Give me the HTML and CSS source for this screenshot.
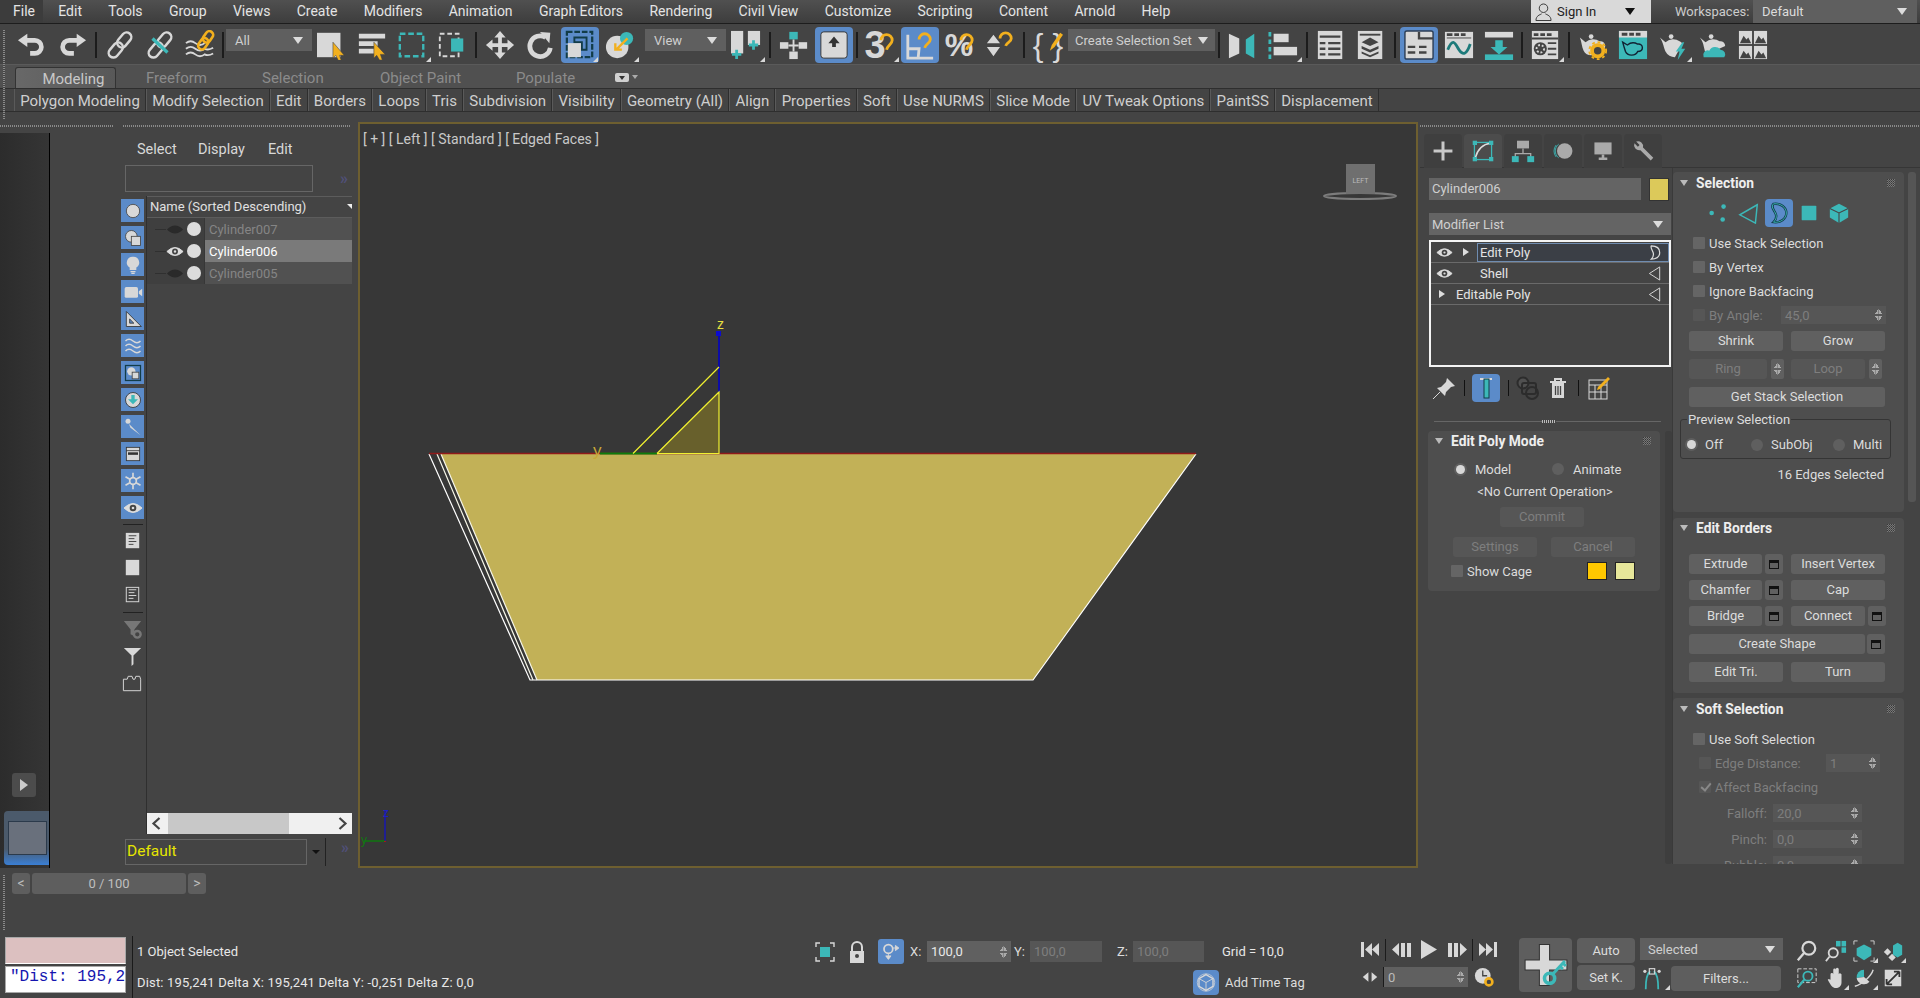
FILE: index.html
```html
<!DOCTYPE html>
<html lang="en">
<head>
  <meta charset="UTF-8">
  <title>3ds Max</title>
  <link rel="stylesheet" href="styles.css">
</head>
<body>

<!-- icon set -->
<svg class="defs" width="0" height="0">
  <symbol id="i-undo" viewBox="0 0 32 32"><path d="M9 11h10a6.500 6.500 0 0 1 0 14h-5" fill="none" stroke="#d8d8d8" stroke-width="5"/><path d="M1 11l10-7v14z" fill="#d8d8d8"/></symbol>
  <symbol id="i-redo" viewBox="0 0 32 32"><path d="M23 11h-10a6.500 6.500 0 0 0 0 14h5" fill="none" stroke="#d8d8d8" stroke-width="5"/><path d="M31 11l-10-7v14z" fill="#d8d8d8"/></symbol>
  <symbol id="i-link" viewBox="0 0 32 32"><g transform="rotate(-50 16 16)" fill="none" stroke="#d8d8d8" stroke-width="2.600"><rect x="0" y="11" width="18" height="10" rx="5"/><rect x="14" y="11" width="18" height="10" rx="5"/></g></symbol>
  <symbol id="i-unlink" viewBox="0 0 32 32"><g transform="rotate(-50 16 16)" fill="none" stroke="#d8d8d8" stroke-width="2.600"><rect x="0" y="11" width="18" height="10" rx="5"/><rect x="14" y="11" width="18" height="10" rx="5"/></g><path d="M8 9l16 15" stroke="#3cb8b8" stroke-width="3.500"/></symbol>
  <symbol id="i-bind" viewBox="0 0 32 32"><path d="M1 14q5-4 10 0t10 0M1 20q5-4 10 0t10 0q4 2 9-1M1 26q5-4 10 0t10 0q4 2 9-1" fill="none" stroke="#d8d8d8" stroke-width="2"/><g transform="rotate(-55 22 11)" fill="none" stroke="#f2b01e" stroke-width="2.800"><rect x="11" y="7" width="13" height="8" rx="4"/><rect x="20" y="7" width="13" height="8" rx="4"/></g></symbol>
  <symbol id="i-sel" viewBox="0 0 32 32"><rect x="0" y="3" width="25" height="26" fill="#d8d8d8"/><path d="M17 13l12 14-5 0 2 6-3 0-3-6-3 3z" fill="#f2b01e" stroke="#444" stroke-width=".6"/></symbol>
  <symbol id="i-name" viewBox="0 0 32 32"><path d="M2 4h28v5H2zM2 12h20v5H2zM2 20h18v5H2z" fill="#d8d8d8"/><path d="M18 13l12 13-5 0 2 6-3 0-3-5-3 3z" fill="#f2b01e" stroke="#444" stroke-width=".6"/></symbol>
  <symbol id="i-rect" viewBox="0 0 32 32"><rect x="3" y="4" width="25" height="24" fill="none" stroke="#3cb8b8" stroke-width="2.500" stroke-dasharray="6 3"/></symbol>
  <symbol id="i-window" viewBox="0 0 32 32"><rect x="3" y="4" width="20" height="24" fill="none" stroke="#d8d8d8" stroke-width="2" stroke-dasharray="5 3"/><rect x="15" y="9" width="13" height="14" fill="#3cb8b8"/></symbol>
  <symbol id="i-move" viewBox="0 0 32 32"><path d="M16 1l6 7h-4v6h6v-4l7 6-7 6v-4h-6v6h4l-6 7-6-7h4v-6H8v4l-7-6 7-6v4h6V8h-4z" fill="#d8d8d8"/></symbol>
  <symbol id="i-rotate" viewBox="0 0 32 32"><path d="M22 8a11 11 0 1 0 5 11" fill="none" stroke="#d8d8d8" stroke-width="5"/><path d="M16 2l11 1-1 11z" fill="#d8d8d8"/></symbol>
  <symbol id="i-scale" viewBox="0 0 32 32"><rect x="2" y="2" width="27" height="27" fill="none" stroke="#123c48" stroke-width="2.400" stroke-dasharray="6 2"/><path d="M10 8h13v13h-5v-8h-8z" fill="none" stroke="#123c48" stroke-width="2"/><rect x="3" y="14" width="14" height="15" fill="#d8d8d8"/></symbol>
  <symbol id="i-pivot" viewBox="0 0 32 32"><circle cx="13" cy="18" r="12" fill="#d8d8d8"/><circle cx="23" cy="9" r="7" fill="#3cb8b8"/><path d="M24 9L12 21M11 14v7h7" fill="none" stroke="#f2b01e" stroke-width="2.500"/></symbol>
  <symbol id="i-snapbars" viewBox="0 0 32 32"><rect x="0" y="1" width="13" height="24" fill="#d8d8d8"/><rect x="18" y="1" width="13" height="15" fill="#d8d8d8"/><path d="M6 21v10M1 26h10M24 11v10M19 16h10" stroke="#3cb8b8" stroke-width="3"/></symbol>
  <symbol id="i-cross" viewBox="0 0 32 32"><rect x="11" y="2" width="9" height="8" fill="#3cb8b8"/><rect x="11" y="23" width="9" height="8" fill="#d8d8d8"/><rect x="1" y="13" width="9" height="7" fill="#d8d8d8"/><rect x="21" y="13" width="9" height="7" fill="#d8d8d8"/><path d="M15.500 10v13M10 16.500h11" stroke="#d8d8d8" stroke-width="2"/></symbol>
  <symbol id="i-key" viewBox="0 0 32 32"><rect x="2" y="2" width="28" height="28" rx="3" fill="#d8d8d8" stroke="#333" stroke-width="1"/><path d="M16 7l6 7h-4v4h-4v-4h-4z" fill="#333"/></symbol>
  <symbol id="i-magnet" viewBox="0 0 32 32"><path d="M17 11a6 6 0 1 1 12 0c0 4-5 5-6 10" fill="none" stroke="#f2b01e" stroke-width="3"/></symbol>
  <symbol id="i-angle" viewBox="0 0 32 32"><path d="M3 5v25h27M3 20h12l-1 10" fill="none" stroke="#d8d8d8" stroke-width="3"/><path d="M15 10a6 6 0 1 1 12 0c0 4-5 5-6 9" fill="none" stroke="#f2b01e" stroke-width="3"/></symbol>
  <symbol id="i-spin" viewBox="0 0 32 32"><path d="M2 14l7-9 7 9zM2 18h14l-7 10z" fill="#d8d8d8"/><path d="M16 9a6 6 0 1 1 12 0c0 4-5 4-6 8" fill="none" stroke="#f2b01e" stroke-width="3"/></symbol>
  <symbol id="i-pencil" viewBox="0 0 32 32"><path d="M18 22l2-6 9-13 3 2-9 13z" fill="#f2b01e"/></symbol>
  <symbol id="i-mirror" viewBox="0 0 32 32"><path d="M1 4l11 5v16l-11 5z" fill="#d8d8d8"/><path d="M15 2v29" stroke="#444" stroke-width="2"/><path d="M28 4l-9 6v15l9 5z" fill="#3cb8b8"/></symbol>
  <symbol id="i-align" viewBox="0 0 32 32"><path d="M2 2v29" stroke="#3cb8b8" stroke-width="3" stroke-dasharray="5 3"/><rect x="6" y="4" width="16" height="9" fill="#d8d8d8"/><rect x="6" y="18" width="25" height="9" fill="#d8d8d8"/></symbol>
  <symbol id="i-list" viewBox="0 0 32 32"><rect x="2" y="1" width="26" height="30" fill="#d8d8d8"/><path d="M4 7h22M4 14h6M13 14h13M4 20h6M13 20h13M4 26h6M13 26h13" stroke="#444" stroke-width="2.500"/></symbol>
  <symbol id="i-layers" viewBox="0 0 32 32"><rect x="2" y="1" width="26" height="30" fill="#d8d8d8"/><path d="M4 5h22" stroke="#444" stroke-width="2"/><path d="M15 8l9 5-9 4-9-4zM6 17l9 4 9-4v3l-9 4-9-4zM6 23l9 4 9-4v2l-9 4-9-4z" fill="#444"/></symbol>
  <symbol id="i-ribbon" viewBox="0 0 32 32"><rect x="1" y="1" width="30" height="30" rx="2" fill="#d8d8d8" stroke="#2c3e55" stroke-width="1.500"/><path d="M16 2v7h15M4 18h8M16 18h8M4 24h8M16 24h8" stroke="#444" stroke-width="2.500" fill="none"/></symbol>
  <symbol id="i-curve" viewBox="0 0 32 32"><rect x="1" y="2" width="30" height="28" fill="#d8d8d8"/><path d="M3 5h6M11 5h5M18 5h5" stroke="#444" stroke-width="3"/><path d="M3 8.500h26" stroke="#444"/><path d="M4 21c6-14 8-6 12 0s8 6 12-6" fill="none" stroke="#1d7a7a" stroke-width="3"/></symbol>
  <symbol id="i-dope" viewBox="0 0 32 32"><rect x="1" y="2" width="30" height="6" fill="#d8d8d8"/><path d="M12 11h8v7h5l-9 8-9-8h5z" fill="#3cb8b8"/><rect x="1" y="26" width="30" height="6" fill="#3cb8b8"/></symbol>
  <symbol id="i-mat" viewBox="0 0 32 32"><rect x="2" y="1" width="28" height="30" fill="#d8d8d8"/><path d="M4 5h5M11 5h5M18 5h5" stroke="#444" stroke-width="3"/><path d="M2 9h28M19 14h9M19 20h9M19 26h9" stroke="#444" stroke-width="2"/><circle cx="11" cy="20" r="7" fill="#444"/><circle cx="11" cy="20" r="4" fill="none" stroke="#d8d8d8" stroke-dasharray="2 2" stroke-width="2"/></symbol>
  <symbol id="i-pot-gear" viewBox="0 0 32 32"><path d="M2 8l6 5a11 10 0 0 1 15-1 5 5 0 0 1 6 5c0 4-4 5-6 5-3 6-14 7-17 0-2-4-2-9-4-14z" fill="#d8d8d8"/><circle cx="14" cy="7" r="2.500" fill="#d8d8d8"/><circle cx="21" cy="22" r="6" fill="#444" stroke="#f2b01e" stroke-width="4"/><circle cx="21" cy="22" r="9" fill="none" stroke="#f2b01e" stroke-width="2" stroke-dasharray="3 3"/></symbol>
  <symbol id="i-pot-teal" viewBox="0 0 32 32"><rect x="1" y="1" width="30" height="30" fill="#3cb8b8"/><rect x="1" y="1" width="30" height="7" fill="#d8d8d8"/><path d="M4 4.500h6M12 4.500h5M19 4.500h5" stroke="#444" stroke-width="3"/><path d="M5 13l5 3a9 8 0 0 1 11-1 4 4 0 0 1 5 4c0 3-3 4-5 4-2 5-11 5-13 0-1-3-2-6-3-10z" fill="none" stroke="#123" stroke-width="1.500"/></symbol>
  <symbol id="i-pot-bolt" viewBox="0 0 32 32"><path d="M2 8l6 5a11 10 0 0 1 15-1 5 5 0 0 1 3 3l-8 14c-4 0-8-2-10-6-2-4-2-9-6-15z" fill="#d8d8d8"/><circle cx="14" cy="7" r="2.500" fill="#d8d8d8"/><path d="M26 13l-7 10h4l-2 9 8-12h-4l3-7z" fill="#3cb8b8"/></symbol>
  <symbol id="i-pot-cloud" viewBox="0 0 32 32"><path d="M2 8l6 5a11 10 0 0 1 15-1 5 5 0 0 1 6 5l-20 9c-3-4-2-12-7-18z" fill="#d8d8d8"/><circle cx="14" cy="7" r="2.500" fill="#d8d8d8"/><path d="M6 29a5 5 0 0 1 6-7 7 7 0 0 1 12-1 5 5 0 0 1 4 8z" fill="#3cb8b8"/></symbol>
  <symbol id="i-images" viewBox="0 0 32 32"><g fill="#d8d8d8"><rect x="1" y="1" width="14" height="14"/><rect x="17" y="1" width="14" height="14"/><rect x="1" y="17" width="14" height="14"/><rect x="17" y="17" width="14" height="14"/></g><path d="M2 14l4-8 3 4 2-2 3 6zM18 14l4-8 3 4 2-2 3 6zM2 30l4-8 3 4 2-2 3 6zM18 30l4-8 3 4 2-2 3 6z" fill="#444"/></symbol>
  <symbol id="i-eye" viewBox="0 0 20 12"><path d="M1 6q9-9 18 0q-9 9-18 0z" fill="#ddd" stroke="#ddd"/><circle cx="10" cy="6" r="3.300" fill="#444"/><circle cx="10" cy="6" r="1.300" fill="#ddd"/></symbol>
  <symbol id="i-vert" viewBox="0 0 24 24"><g fill="#3cb8b8"><circle cx="4" cy="12" r="2.500"/><circle cx="17" cy="5" r="2.500"/><circle cx="16" cy="19" r="2.500"/></g></symbol>
  <symbol id="i-edge" viewBox="0 0 24 24"><path d="M21 3L2 14l17 9z" fill="none" stroke="#3cb8b8" stroke-width="1.600"/></symbol>
  <symbol id="i-border" viewBox="0 0 24 24"><path d="M6 2c8-1 14 4 14 10s-6 11-14 10c3-3 4-6 2-10S3 5 6 2z" fill="none" stroke="#123c48" stroke-width="2.600"/><path d="M6 2c8-1 14 4 14 10s-6 11-14 10c3-3 4-6 2-10S3 5 6 2z" fill="none" stroke="#3cb8b8" stroke-width="1"/></symbol>
  <symbol id="i-poly" viewBox="0 0 24 24"><rect x="4" y="4" width="16" height="16" rx="1" fill="#3cb8b8"/></symbol>
  <symbol id="i-elem" viewBox="0 0 24 24"><path d="M12 2l10 5v10l-10 6L2 17V7z" fill="#3cb8b8"/><path d="M2 7l10 5 10-5M12 12v11" fill="none" stroke="#444" stroke-width="1.200"/></symbol>
</svg>

<i class="handle handle-top"></i>
<i class="handle handle-low"></i>

<header class="menubar">
  <div class="menu-items">
    <a class="menu-item menu-current">File</a>
    <a class="menu-item">Edit</a>
    <a class="menu-item">Tools</a>
    <a class="menu-item">Group</a>
    <a class="menu-item">Views</a>
    <a class="menu-item">Create</a>
    <a class="menu-item">Modifiers</a>
    <a class="menu-item">Animation</a>
    <a class="menu-item">Graph Editors</a>
    <a class="menu-item">Rendering</a>
    <a class="menu-item">Civil View</a>
    <a class="menu-item">Customize</a>
    <a class="menu-item">Scripting</a>
    <a class="menu-item">Content</a>
    <a class="menu-item">Arnold</a>
    <a class="menu-item">Help</a>
  </div>
  <div class="signin">
    <svg class="signin-icon" viewBox="0 0 18 20"><circle cx="9" cy="6" r="4.500" fill="none" stroke="#333"/><path d="M1 19c0-5 4-6 6-7M17 19c0-5-4-6-6-7M1 19h16" fill="none" stroke="#333"/></svg>
    <span>Sign In</span>
    <i class="arrow arrow-dark"></i>
  </div>
  <span class="workspaces-label">Workspaces:</span>
  <div class="workspaces"><span>Default</span><i class="arrow"></i></div>
</header>

<div class="toolbar">
  <span class="tb"><svg><use href="#i-undo"/></svg></span>
  <span class="tb"><svg><use href="#i-redo"/></svg></span>
  <i class="tb-sep"></i>
  <span class="tb"><svg><use href="#i-link"/></svg></span>
  <span class="tb"><svg><use href="#i-unlink"/></svg></span>
  <span class="tb"><svg><use href="#i-bind"/></svg></span>
  <i class="tb-sep tb-sep-small"></i>
  <div class="combo combo-all"><span>All</span><i class="arrow"></i></div>
  <span class="tb"><svg><use href="#i-sel"/></svg></span>
  <span class="tb"><svg><use href="#i-name"/></svg></span>
  <span class="tb fly"><svg><use href="#i-rect"/></svg></span>
  <span class="tb"><svg><use href="#i-window"/></svg></span>
  <i class="tb-sep"></i>
  <span class="tb"><svg><use href="#i-move"/></svg></span>
  <span class="tb"><svg><use href="#i-rotate"/></svg></span>
  <span class="tb tb-on fly"><svg><use href="#i-scale"/></svg></span>
  <span class="tb fly"><svg><use href="#i-pivot"/></svg></span>
  <div class="combo combo-view"><span>View</span><i class="arrow"></i></div>
  <span class="tb fly"><svg><use href="#i-snapbars"/></svg></span>
  <i class="tb-sep"></i>
  <span class="tb"><svg><use href="#i-cross"/></svg></span>
  <span class="tb tb-on"><svg><use href="#i-key"/></svg></span>
  <i class="tb-sep tb-sep-small"></i>
  <span class="tb fly tb-glyph"><b class="g-three">3</b><svg><use href="#i-magnet"/></svg></span>
  <span class="tb tb-on"><svg><use href="#i-angle"/></svg></span>
  <span class="tb tb-glyph"><b class="g-pct">%</b><svg><use href="#i-magnet"/></svg></span>
  <span class="tb"><svg><use href="#i-spin"/></svg></span>
  <i class="tb-sep"></i>
  <span class="tb tb-glyph"><b class="g-brace">{ }</b><svg><use href="#i-pencil"/></svg></span>
  <div class="combo combo-set"><span>Create Selection Set</span><i class="arrow"></i></div>
  <i class="tb-sep"></i>
  <span class="tb"><svg><use href="#i-mirror"/></svg></span>
  <span class="tb fly"><svg><use href="#i-align"/></svg></span>
  <i class="tb-sep"></i>
  <span class="tb"><svg><use href="#i-list"/></svg></span>
  <span class="tb"><svg><use href="#i-layers"/></svg></span>
  <i class="tb-sep"></i>
  <span class="tb tb-on"><svg><use href="#i-ribbon"/></svg></span>
  <span class="tb"><svg><use href="#i-curve"/></svg></span>
  <span class="tb"><svg><use href="#i-dope"/></svg></span>
  <i class="tb-sep tb-sep-small"></i>
  <span class="tb fly"><svg><use href="#i-mat"/></svg></span>
  <i class="tb-sep"></i>
  <span class="tb"><svg><use href="#i-pot-gear"/></svg></span>
  <span class="tb"><svg><use href="#i-pot-teal"/></svg></span>
  <span class="tb fly"><svg><use href="#i-pot-bolt"/></svg></span>
  <span class="tb"><svg><use href="#i-pot-cloud"/></svg></span>
  <span class="tb"><svg><use href="#i-images"/></svg></span>
</div>

<div class="ribbon-tabs">
  <span class="rtab rtab-on">Modeling</span>
  <span class="rtab rtab-free">Freeform</span>
  <span class="rtab rtab-sel">Selection</span>
  <span class="rtab rtab-paint">Object Paint</span>
  <span class="rtab rtab-pop">Populate</span>
  <span class="rtab-menu"><i></i></span>
  <i class="arrow arrow-tiny"></i>
</div>
<div class="ribbon-row">
  <span>Polygon Modeling</span>
  <span>Modify Selection</span>
  <span>Edit</span>
  <span>Borders</span>
  <span>Loops</span>
  <span>Tris</span>
  <span>Subdivision</span>
  <span>Visibility</span>
  <span>Geometry (All)</span>
  <span>Align</span>
  <span>Properties</span>
  <span>Soft</span>
  <span>Use NURMS</span>
  <span>Slice Mode</span>
  <span>UV Tweak Options</span>
  <span>PaintSS</span>
  <span>Displacement</span>
</div>

<main class="workspace">

  <div class="left-dock">
    <div class="grip-row"><i class="grip grip-a"></i><i class="grip grip-b"></i></div>
    <div class="left-body">
      <div class="strip">
        <span class="strip-play"><i></i></span>
        <span class="strip-thumb"><i></i></span>
      </div>
      <section class="explorer">
        <nav class="explorer-menu"><span>Select</span><span>Display</span><span>Edit</span></nav>
        <div class="explorer-search"><i class="search-box"></i><span class="more">»</span></div>
        <div class="explorer-body">
          <div class="filter-col">
            <span class="fbtn"><svg viewBox="0 0 24 24"><circle cx="12" cy="12" r="8" fill="#d8d8d8" stroke="#444"/></svg></span>
            <span class="fbtn"><svg viewBox="0 0 24 24"><circle cx="10" cy="10" r="7" fill="#d8d8d8" stroke="#444"/><rect x="10" y="10" width="11" height="11" fill="#d8d8d8" stroke="#444"/></svg></span>
            <span class="fbtn"><svg viewBox="0 0 24 24"><path d="M12 2a7 7 0 0 1 4 13v3H8v-3a7 7 0 0 1 4-13z" fill="#d8d8d8"/><path d="M9 20h6M10 22h4" stroke="#d8d8d8" stroke-width="1.500"/></svg></span>
            <span class="fbtn"><svg viewBox="0 0 24 24"><rect x="2" y="6" width="16" height="13" rx="2" fill="#d8d8d8"/><path d="M19 11l4-3v9l-4-3z" fill="#d8d8d8"/></svg></span>
            <span class="fbtn"><svg viewBox="0 0 24 24"><path d="M4 3l18 18H4z" fill="#d8d8d8" stroke="#333"/><path d="M8 12l5 5H8z" fill="#5b8bc9" stroke="#333"/></svg></span>
            <span class="fbtn"><svg viewBox="0 0 24 24"><path d="M3 6q4-4 9 0t9 0M3 12q4-4 9 0t9 0M3 18q4-4 9 0t9 0" fill="none" stroke="#d8d8d8" stroke-width="1.800"/></svg></span>
            <span class="fbtn"><svg viewBox="0 0 24 24"><rect x="3" y="3" width="18" height="18" fill="none" stroke="#123c48" stroke-width="1.500"/><circle cx="10" cy="10" r="5" fill="#d8d8d8"/><rect x="11" y="11" width="8" height="8" fill="#d8d8d8" stroke="#444"/></svg></span>
            <span class="fbtn"><svg viewBox="0 0 24 24"><circle cx="12" cy="12" r="9" fill="#d8d8d8" stroke="#333"/><path d="M10 6h4v5h4l-6 6-6-6h4z" fill="#3cb8b8"/></svg></span>
            <span class="fbtn"><svg viewBox="0 0 24 24"><circle cx="6" cy="5" r="3" fill="#d8d8d8"/><path d="M7 8l14 14-12-9z" fill="#d8d8d8"/></svg></span>
            <span class="fbtn"><svg viewBox="0 0 24 24"><rect x="4" y="4" width="16" height="16" fill="#d8d8d8" stroke="#333"/><path d="M4 8h16" stroke="#333"/><rect x="6" y="10" width="12" height="3" fill="#333"/></svg></span>
            <span class="fbtn"><svg viewBox="0 0 24 24"><path d="M12 2v20M3 7l18 10M21 7L3 17" stroke="#d8d8d8" stroke-width="2"/><circle cx="12" cy="12" r="4" fill="#5b8bc9" stroke="#d8d8d8" stroke-width="2"/></svg></span>
            <span class="fbtn"><svg viewBox="0 0 20 12"><use href="#i-eye"/></svg></span>
            <i class="filter-sep"></i>
            <span class="ftool"><svg viewBox="0 0 24 24"><rect x="5" y="3" width="14" height="16" fill="#d8d8d8"/><path d="M8 6h8M8 9h6M8 12h8M8 15h5" stroke="#444"/></svg></span>
            <span class="ftool"><svg viewBox="0 0 24 24"><rect x="5" y="3" width="14" height="16" fill="#d8d8d8"/></svg></span>
            <span class="ftool"><svg viewBox="0 0 24 24"><rect x="5.500" y="3.500" width="13" height="15" fill="none" stroke="#d8d8d8"/><path d="M8 6h8M8 9h6M8 12h8M8 15h5" stroke="#d8d8d8"/></svg></span>
            <i class="filter-sep filter-sep-b"></i>
            <span class="ftool"><svg viewBox="0 0 24 24"><path d="M3 3h18l-7 9v7l-4-2v-5z" fill="#777"/><circle cx="17" cy="17" r="3.500" fill="none" stroke="#777" stroke-width="2.500"/></svg></span>
            <span class="ftool"><svg viewBox="0 0 24 24"><path d="M3 3h18l-8 8v9l-2 2v-11z" fill="#d8d8d8"/></svg></span>
            <span class="ftool"><svg viewBox="0 0 24 24"><path d="M2.500 7.500h4l1-3h4l1 3h2l1-3h4l1 3v12h-18z" fill="none" stroke="#d8d8d8"/></svg></span>
          </div>
          <div class="tree">
            <div class="tree-head"><span>Name (Sorted Descending)</span><i class="corner"></i></div>
            <div class="tree-row">
              <span class="gutter"><i class="branch"></i><svg class="eye eye-off" viewBox="0 0 20 12"><path d="M1 6q9-9 18 0q-9 9-18 0z"/></svg><i class="dot"></i></span>
              <span class="tree-name">Cylinder007</span>
            </div>
            <div class="tree-row tree-row-on">
              <span class="gutter"><i class="branch"></i><svg class="eye" viewBox="0 0 20 12"><use href="#i-eye"/></svg><i class="dot"></i></span>
              <span class="tree-name">Cylinder006</span>
            </div>
            <div class="tree-row">
              <span class="gutter"><i class="branch"></i><svg class="eye eye-off" viewBox="0 0 20 12"><path d="M1 6q9-9 18 0q-9 9-18 0z"/></svg><i class="dot"></i></span>
              <span class="tree-name">Cylinder005</span>
            </div>
            <div class="tree-fill"></div>
            <div class="hscroll">
              <svg class="hscroll-btn" viewBox="0 0 20 21"><path d="M12 5l-6 5.500 6 5.500" fill="none" stroke="#444" stroke-width="2.200"/></svg>
              <i class="hscroll-thumb"></i>
              <svg class="hscroll-btn hscroll-end" viewBox="0 0 20 21"><path d="M8 5l6 5.500-6 5.500" fill="none" stroke="#444" stroke-width="2.200"/></svg>
            </div>
          </div>
        </div>
        <div class="layer-row">
          <span class="layer-field">Default</span>
          <i class="arrow arrow-dark arrow-small"></i>
          <i class="layer-sep"></i>
          <span class="more">»</span>
        </div>
      </section>
    </div>
  </div>

  <!-- viewport contents sit on a free canvas, page coordinates in the viewBox -->
  <section class="viewport">
    <span class="vp-label">[ + ] [ Left ] [ Standard ] [ Edged Faces ]</span>
    <svg class="vp-canvas" viewBox="358 122 1060 746">
      <polygon points="441,454 1196,454 1033,680 537,680" fill="#c2b157"/>
      <path d="M1196 454L1033 680H530L429 454" fill="none" stroke="#fff" stroke-width="1.200"/>
      <path d="M437 454L533 680M441 454L537 680" stroke="#f6f6e8" stroke-width="1.200"/>
      <path d="M429 453.500H1196" stroke="#8f1a1a" stroke-width="1.600"/>
      <path d="M600 453.500H657" stroke="#0c7c0c" stroke-width="2"/>
      <path d="M719 334V392" stroke="#0c0ca8" stroke-width="2"/>
      <rect x="716" y="331" width="5" height="5" fill="#0c0cd0"/>
      <polygon points="657,453 719,392 719,453" fill="#68602c"/>
      <path d="M657 453.500L719 392V453.500H657M633 453.500L719 367" fill="none" stroke="#f0f030" stroke-width="1.200"/>
      <text x="717" y="329" class="vp-axis">z</text>
      <text x="593" y="456" class="vp-axis vp-axis-y">y</text>
      <path d="M385 810V841" stroke="#1818b0" stroke-width="1.500"/>
      <path d="M364 841H385" stroke="#117711" stroke-width="1.500"/>
      <path d="M385 841V842" stroke="#aa1515" stroke-width="2"/>
      <text x="383" y="817" class="vp-mini">z</text>
      <text x="361" y="844" class="vp-mini vp-mini-y">y</text>
      <ellipse cx="1360" cy="196" rx="36" ry="3" fill="none" stroke="#7c7c7c" stroke-width="2"/>
      <rect x="1346" y="164" width="29" height="30" fill="#6f6f6f"/>
      <text x="1360.500" y="183" class="vp-cube">LEFT</text>
    </svg>
  </section>

  <aside class="command">
    <div class="grip grip-cmd"></div>
    <div class="cmd-tabs">
      <span class="ctab"><svg viewBox="0 0 28 28"><path d="M14 3v22M3 14h22" stroke="#c8c8c8" stroke-width="3.500"/></svg></span>
      <span class="ctab ctab-on"><svg viewBox="0 0 28 28"><rect x="4" y="4" width="20" height="20" fill="none" stroke="#3cb8b8" stroke-width="1.500"/><path d="M5 22C8 11 14 6 23 5" fill="none" stroke="#ddd" stroke-width="1.800"/><g fill="#3cb8b8"><rect x="2" y="2" width="5" height="5"/><rect x="21" y="2" width="5" height="5"/><rect x="2" y="21" width="5" height="5"/><rect x="21" y="21" width="5" height="5"/></g></svg></span>
      <span class="ctab"><svg viewBox="0 0 28 28"><rect x="7" y="2" width="14" height="9" fill="#aaa"/><path d="M14 11v6M5 21v-4h18v4" fill="none" stroke="#aaa" stroke-width="1.500"/><rect x="1" y="20" width="8" height="7" fill="#3cb8b8"/><rect x="19" y="20" width="8" height="7" fill="#3cb8b8"/></svg></span>
      <span class="ctab"><svg viewBox="0 0 28 28"><circle cx="16" cy="14" r="9" fill="#aaa"/><path d="M9 6a10 10 0 0 0 0 16M6 7a11 11 0 0 0 0 14" fill="none" stroke="#3cb8b8"/></svg></span>
      <span class="ctab"><svg viewBox="0 0 28 28"><rect x="4" y="4" width="20" height="14" fill="#aaa"/><path d="M9 23h10M14 18v5" stroke="#aaa" stroke-width="3"/></svg></span>
      <span class="ctab"><svg viewBox="0 0 28 28"><path d="M6 3l4 4-2 2-4-4a6 6 0 0 0 7 8l12 12 3-3-12-12a6 6 0 0 0-8-7z" fill="#aaa"/></svg></span>
    </div>

    <div class="cmd-body">
      <div class="col-stack">
        <div class="name-row"><span class="name-field">Cylinder006</span><i class="name-swatch"></i></div>
        <div class="mod-list"><span>Modifier List</span><i class="arrow"></i></div>
        <div class="stack-box">
          <div class="stack-row">
            <svg class="stack-eye" viewBox="0 0 20 12"><use href="#i-eye"/></svg>
            <i class="tri-right"></i>
            <span class="stack-name stack-name-on">Edit Poly<svg class="stack-sub" viewBox="0 0 14 16"><path d="M3 1c6 0 9 3 9 7s-3 7-9 7c2-2 3-4 2-7S2 3 3 1z" fill="none" stroke="#ddd" stroke-width="1.300"/></svg></span>
          </div>
          <div class="stack-row">
            <svg class="stack-eye" viewBox="0 0 20 12"><use href="#i-eye"/></svg>
            <i class="tri-space"></i>
            <span class="stack-name">Shell<svg class="stack-sub" viewBox="0 0 14 16"><path d="M12 1L1 8l11 7z" fill="none" stroke="#ddd"/></svg></span>
          </div>
          <div class="stack-row stack-row-base">
            <i class="tri-right"></i>
            <span class="stack-name">Editable Poly<svg class="stack-sub" viewBox="0 0 14 16"><path d="M12 1L1 8l11 7z" fill="none" stroke="#ddd"/></svg></span>
          </div>
        </div>
        <div class="stack-tools">
          <span class="st"><svg viewBox="0 0 24 24"><path d="M15 2l8 8-4 1-5 5-1 4-8-8 4-1 5-5z" fill="#d8d8d8"/><path d="M8 16l-7 7" stroke="#d8d8d8"/></svg></span>
          <i class="st-sep"></i>
          <span class="st st-on"><svg viewBox="0 0 24 24"><path d="M6 3h12M12 3v18" stroke="#d8d8d8" stroke-width="2"/><rect x="10" y="3" width="5" height="19" fill="#3cb8b8" stroke="#123c48"/></svg></span>
          <i class="st-sep"></i>
          <span class="st"><svg viewBox="0 0 24 24"><g fill="none" stroke="#2c2c2c" stroke-width="2"><circle cx="7" cy="7" r="5.500" fill="#505050"/><rect x="6" y="7" width="14" height="11" rx="2"/><circle cx="16" cy="17" r="6"/></g></svg></span>
          <span class="st"><svg viewBox="0 0 24 24"><path d="M4 6h16M9 6V3h6v3" fill="none" stroke="#d8d8d8" stroke-width="2"/><path d="M6 7h12v15H6z" fill="#d8d8d8"/><path d="M9.500 10v9M12 10v9M14.500 10v9" stroke="#444" stroke-width="1.300"/></svg></span>
          <i class="st-sep"></i>
          <span class="st"><svg viewBox="0 0 24 24"><rect x="2" y="4" width="18" height="19" fill="none" stroke="#d8d8d8"/><path d="M2 9h18M8 9v14M14 9v14M2 16h18" stroke="#d8d8d8"/><path d="M10 14l1-3 10-10 2 2-10 10z" fill="#f2b01e"/></svg></span>
        </div>
        <div class="divider"><i></i></div>
        <div class="scroll-wrap">
          <section class="rollout rollout-mode">
            <h3 class="roll-head"><i class="tri-down"></i>Edit Poly Mode<i class="roll-grip"></i></h3>
            <div class="mode-radios">
              <span class="radio-item mode-model"><i class="radio radio-on"></i>Model</span>
              <span class="radio-item"><i class="radio"></i>Animate</span>
            </div>
            <p class="mode-op">&lt;No Current Operation&gt;</p>
            <div class="btn-row btn-row-center"><span class="btn btn-off btn-commit">Commit</span></div>
            <div class="btn-row btn-row-settings"><span class="btn btn-off btn-settings">Settings</span><span class="btn btn-off btn-settings">Cancel</span></div>
            <div class="cage-row">
              <i class="check"></i><span>Show Cage</span>
              <i class="swatch swatch-a"></i><i class="swatch swatch-b"></i>
            </div>
          </section>
          <i class="vscroll"></i>
        </div>
      </div>

      <div class="col-rollouts">
        <div class="roll-list">
          <section class="rollout rollout-sel">
            <h3 class="roll-head"><i class="tri-down"></i>Selection<i class="roll-grip"></i></h3>
            <div class="sub-row">
              <span class="sub"><svg><use href="#i-vert"/></svg></span>
              <span class="sub"><svg><use href="#i-edge"/></svg></span>
              <span class="sub sub-on"><svg><use href="#i-border"/></svg></span>
              <span class="sub"><svg><use href="#i-poly"/></svg></span>
              <span class="sub"><svg><use href="#i-elem"/></svg></span>
            </div>
            <label class="chk"><i class="check"></i>Use Stack Selection</label>
            <label class="chk"><i class="check"></i>By Vertex</label>
            <label class="chk"><i class="check"></i>Ignore Backfacing</label>
            <label class="chk chk-off"><i class="check"></i><span class="angle-label">By Angle:</span>
              <span class="spinner spinner-angle"><span>45,0</span><i class="spin-arrows"></i></span>
            </label>
            <div class="btn-row btn-row-first"><span class="btn btn-half">Shrink</span><span class="btn btn-half">Grow</span></div>
            <div class="btn-row btn-row-gap btn-row-ring">
              <span class="btn btn-off btn-ring">Ring</span><span class="btn-spin"><i class="spin-arrows"></i></span>
              <span class="btn btn-off btn-loop">Loop</span><span class="btn-spin"><i class="spin-arrows"></i></span>
            </div>
            <div class="btn-row btn-row-gap"><span class="btn btn-full">Get Stack Selection</span></div>
            <div class="preview">
              <span class="preview-title">Preview Selection</span>
              <span class="radio-item preview-off"><i class="radio radio-on"></i>Off</span>
              <span class="radio-item preview-sub"><i class="radio"></i>SubObj</span>
              <span class="radio-item"><i class="radio"></i>Multi</span>
            </div>
            <p class="sel-count">16 Edges Selected</p>
          </section>

          <section class="rollout rollout-borders">
            <h3 class="roll-head"><i class="tri-down"></i>Edit Borders<i class="roll-grip"></i></h3>
            <div class="btn-row border-first"><span class="btn btn-opt">Extrude</span><span class="btn-box"><i></i></span><span class="btn btn-half btn-right">Insert Vertex</span></div>
            <div class="btn-row border-row"><span class="btn btn-opt">Chamfer</span><span class="btn-box"><i></i></span><span class="btn btn-half btn-right">Cap</span></div>
            <div class="btn-row border-row"><span class="btn btn-opt">Bridge</span><span class="btn-box"><i></i></span><span class="btn btn-connect">Connect</span><span class="btn-box"><i></i></span></div>
            <div class="btn-row border-wide"><span class="btn btn-shape">Create Shape</span><span class="btn-box"><i></i></span></div>
            <div class="btn-row border-wide"><span class="btn btn-half">Edit Tri.</span><span class="btn btn-half">Turn</span></div>
          </section>

          <section class="rollout rollout-soft">
            <h3 class="roll-head"><i class="tri-down"></i>Soft Selection<i class="roll-grip"></i></h3>
            <label class="chk chk-soft"><i class="check"></i>Use Soft Selection</label>
            <label class="chk chk-off chk-in"><i class="check"></i><span class="edge-label">Edge Distance:</span>
              <span class="spinner spinner-edge"><span>1</span><i class="spin-arrows"></i></span>
            </label>
            <label class="chk chk-off chk-in"><i class="check check-on"></i>Affect Backfacing</label>
            <div class="soft-row"><span>Falloff:</span><span class="spinner spinner-soft"><span>20,0</span><i class="spin-arrows"></i></span></div>
            <div class="soft-row"><span>Pinch:</span><span class="spinner spinner-soft"><span>0,0</span><i class="spin-arrows"></i></span></div>
            <div class="soft-row"><span>Bubble:</span><span class="spinner spinner-soft"><span>0,0</span><i class="spin-arrows"></i></span></div>
          </section>
        </div>
        <i class="vscroll vscroll-right"></i>
      </div>
    </div>
  </aside>
</main>

<footer class="bottom">
  <div class="slider-row">
    <span class="slider-btn">&lt;</span>
    <span class="slider-main">0 / 100</span>
    <span class="slider-btn">&gt;</span>
  </div>
  <div class="status">
    <div class="listener">
      <div class="listener-pink"></div>
      <div class="listener-white">"Dist: 195,241</div>
    </div>
    <i class="status-sep"></i>
    <div class="prompts">
      <span>1 Object Selected</span>
      <span class="prompt-dist">Dist: 195,241 Delta X: 195,241 Delta Y: -0,251 Delta Z: 0,0</span>
    </div>
    <div class="coords">
      <div class="coord-row">
        <span class="co-ico"><svg viewBox="0 0 24 24"><path d="M3 7V3h4M17 3h4v4M21 17v4h-4M7 21H3v-4" fill="none" stroke="#d8d8d8" stroke-width="1.400"/><rect x="7" y="7" width="10" height="10" fill="#3cb8b8"/></svg></span>
        <span class="co-ico co-lock"><svg viewBox="0 0 24 24"><path d="M7 11V7a5 5 0 0 1 10 0v4" fill="none" stroke="#d8d8d8" stroke-width="2"/><rect x="5" y="11" width="14" height="12" fill="#d8d8d8"/><circle cx="12" cy="16" r="2" fill="#444"/></svg></span>
        <span class="co-abs"><svg viewBox="0 0 24 24"><circle cx="9" cy="9" r="5" fill="none" stroke="#d8d8d8" stroke-width="2"/><path d="M14 8h5M17 5l4 3-4 3zM9 14v5M6 17l3 4 3-4z" fill="#d8d8d8" stroke="#d8d8d8"/></svg></span>
        <span class="axis axis-x">X:</span>
        <span class="spinner coord-x"><span>100,0</span><i class="spin-arrows"></i></span>
        <span class="axis axis-y">Y:</span>
        <span class="spinner coord-y"><span>100,0</span></span>
        <span class="axis axis-z">Z:</span>
        <span class="spinner coord-z"><span>100,0</span></span>
        <span class="grid-label">Grid = 10,0</span>
      </div>
      <div class="tag-row">
        <span class="tag-btn"><svg viewBox="0 0 24 24"><path d="M12 3l8 4.500v9L12 21l-8-4.500v-9z" fill="none" stroke="#d8d8d8" stroke-width="1.500"/><path d="M4 7.500l8 4.500 8-4.500M12 12v9" fill="none" stroke="#d8d8d8"/><circle cx="12" cy="12" r="10" fill="none" stroke="#d8d8d8" stroke-width=".8"/></svg></span>
        <span>Add Time Tag</span>
      </div>
    </div>
    <div class="transport">
      <svg class="transport-top" viewBox="0 0 145 24">
        <g fill="#d8d8d8">
          <path d="M1 4h3v15H1zM12 5v13l-7-6.500zM19 5v13l-7-6.500z"/>
          <path d="M39 5v13l-7-6.500zM41 5h4v14h-4zM47 5h4v14h-4z"/>
          <path d="M61 2l16 9.500-16 9.500z"/>
          <path d="M88 5h4v14h-4zM94 5h4v14h-4zM100 5l7 6.500-7 6.500z"/>
          <path d="M119 5l7 6.500-7 6.500zM126 5l7 6.500-7 6.500zM134 4h3v15h-3z"/>
        </g>
        <path d="M25.500 1v22M112.500 1v22" stroke="#1c1c1c"/>
      </svg>
      <div class="transport-low">
        <svg class="key-arrows" viewBox="0 0 20 14"><path d="M8 1v12L1 7zM12 1v12l7-6z" fill="#d8d8d8"/></svg>
        <span class="spinner time-field"><span>0</span><i class="spin-arrows"></i></span>
        <svg class="time-cfg" viewBox="0 0 24 24"><circle cx="10" cy="10" r="9" fill="#d8d8d8"/><path d="M10 4v6h5" fill="none" stroke="#444" stroke-width="1.500"/><circle cx="17" cy="17" r="4" fill="#444" stroke="#f2b01e" stroke-width="3"/></svg>
      </div>
    </div>
    <span class="setkey-big"><svg viewBox="0 0 48 48"><path d="M18 4h10v15h17v10H28v15H18V29H4V19h14z" fill="#d8d8d8" stroke="#333"/><circle cx="28" cy="37" r="5" fill="none" stroke="#3cb8b8" stroke-width="3.500"/><path d="M31 33l12-13M38 25l3 3M41 22l3 3" stroke="#3cb8b8" stroke-width="3"/></svg></span>
    <div class="key-col">
      <span class="keybtn">Auto</span>
      <span class="keybtn">Set K.</span>
    </div>
    <div class="filter-block">
      <div class="combo combo-selected"><span>Selected</span><i class="arrow"></i></div>
      <div class="filter-row">
        <span class="fly fly-key"><svg viewBox="0 0 24 28"><path d="M5 26C5 14 7 8 10 6M19 26C19 14 17 8 14 6" fill="none" stroke="#3cb8b8" stroke-width="2"/><rect x="9" y="3" width="6" height="6" fill="none" stroke="#d8d8d8" stroke-width="1.300"/><circle cx="4" cy="6" r="1.800" fill="#d8d8d8"/><circle cx="20" cy="6" r="1.800" fill="#d8d8d8"/></svg></span>
        <span class="keybtn filters-btn">Filters...</span>
      </div>
    </div>
    <div class="nav-grid">
      <span class="nav"><svg viewBox="0 0 24 24"><circle cx="14" cy="9" r="7" fill="none" stroke="#d8d8d8" stroke-width="2.400"/><path d="M9 14l-7 8" stroke="#d8d8d8" stroke-width="2.600"/></svg></span>
      <span class="nav"><svg viewBox="0 0 24 24"><circle cx="9" cy="14" r="5" fill="none" stroke="#d8d8d8" stroke-width="2"/><path d="M5 18l-4 5" stroke="#d8d8d8" stroke-width="2"/><g fill="#3cb8b8"><rect x="12" y="1" width="5" height="6"/><rect x="18" y="1" width="5" height="6"/><rect x="18" y="8" width="5" height="6"/></g></svg></span>
      <span class="nav fly"><svg viewBox="0 0 24 24"><path d="M12 5l8 4v8l-8 5-8-5V9z" fill="#3cb8b8"/><path d="M1 5V1h4M19 1h4v4M23 19v4h-4M5 23H1v-4" fill="none" stroke="#d8d8d8"/></svg></span>
      <span class="nav fly"><svg viewBox="0 0 24 24"><path d="M17 3l5 3v10l-5 3-5-3V6z" fill="#3cb8b8"/><path d="M6 9l4 4-4 4-4-4zM11 15l4 4-4 4-4-4z" fill="#d8d8d8"/></svg></span>
      <span class="nav"><svg viewBox="0 0 24 24"><rect x="2" y="2" width="20" height="15" fill="none" stroke="#d8d8d8" stroke-dasharray="4 2"/><circle cx="13" cy="10" r="5" fill="none" stroke="#3cb8b8" stroke-width="2"/><path d="M9 14l-7 8" stroke="#3cb8b8" stroke-width="2.400"/></svg></span>
      <span class="nav fly"><svg viewBox="0 0 24 24"><path d="M6 14V8a1 1 0 0 1 3 0V3a1 1 0 0 1 3 0v-1a1 1 0 0 1 3 1v5a1 1 0 0 1 3 1v8c0 4-3 6-6 6-4 0-5-2-9-9l1-1z" fill="#d8d8d8"/></svg></span>
      <span class="nav fly"><svg viewBox="0 0 24 24"><path d="M12 3a8 8 0 0 0-8 9l8-1z" fill="#3cb8b8"/><path d="M4 12a8 8 0 0 0 14 4l-6-5z" fill="#d8d8d8"/><path d="M2 21C10 19 20 10 22 3" fill="none" stroke="#d8d8d8" stroke-width="1.500"/></svg></span>
      <span class="nav"><svg viewBox="0 0 24 24"><rect x="3" y="3" width="18" height="18" fill="#d8d8d8"/><path d="M5 19L19 5M19 5h-6M19 5v6M5 19h6M5 19v-6" fill="none" stroke="#333" stroke-width="2"/></svg></span>
    </div>
  </div>
</footer>

</body>
</html>
```
FILE: styles.css
```css
/* Global */
* {
  box-sizing: border-box;
}

html, body {
  height: 100%;
}

body {
  margin: 0;
  width: 1920px;
  height: 998px;
  overflow: hidden;
  display: flex;
  flex-direction: column;
  background: #444;
  color: #dcdcdc;
  font-family: Roboto, "Open Sans", sans-serif;
  font-size: 13px;
  position: relative;
}

.defs {
  display: block;
  height: 0;
  width: 0;
}

i {
  display: block;
  font-style: normal;
}

p, h3 {
  margin: 0;
}

.arrow {
  width: 0;
  height: 0;
  border-left: 5px solid transparent;
  border-right: 5px solid transparent;
  border-top: 7px solid #dcdcdc;
}

.arrow-dark {
  border-top-color: #111;
}

.arrow-small {
  border-left-width: 4px;
  border-right-width: 4px;
  border-top-width: 4px;
}

.arrow-tiny {
  border-left-width: 3px;
  border-right-width: 3px;
  border-top-width: 4px;
  border-top-color: #aaa;
}

/* Dotted dock handles on the left edge */
.handle {
  position: absolute;
  left: 3px;
  width: 2px;
  background: repeating-linear-gradient(#8a8a8a 0 1px, #444 1px 2px);
  z-index: 2;
}

.handle-top {
  top: 30px;
  height: 90px;
}

.handle-low {
  top: 875px;
  height: 55px;
}

/* Menu bar */
.menubar {
  height: 24px;
  flex: none;
  display: flex;
  background: linear-gradient(#505050, #3d3d3d);
  border-bottom: 1px solid #1d1d1d;
  font-size: 14px;
  position: relative;
}

.menu-items {
  display: flex;
  width: 1531px;
  padding-left: 13px;
  gap: 26.300px;
}

.menu-item {
  line-height: 22px;
  color: #e4e4e4;
}

.menu-current {
  background: #3c3c3c;
  margin-left: -13px;
  padding-left: 13px;
  padding-right: 8px;
  margin-right: -11px;
}

.signin {
  width: 120px;
  height: 23px;
  background: #d9d9d9;
  color: #222;
  display: flex;
  align-items: center;
  padding: 0 16px 0 4px;
  font-size: 13px;
}

.signin span {
  flex: 1;
  margin-left: 5px;
}

.signin-icon {
  width: 17px;
  height: 20px;
}

.workspaces-label {
  margin-left: 24px;
  width: 78px;
  line-height: 23px;
  font-size: 13px;
  color: #ccc;
}

.workspaces {
  width: 164px;
  height: 23px;
  background: #5f5f5f;
  display: flex;
  align-items: center;
  justify-content: space-between;
  padding: 0 10px 0 9px;
  font-size: 13px;
}

/* Main toolbar */
.toolbar {
  height: 41px;
  flex: none;
  display: flex;
  align-items: center;
  padding: 1px 0 0 12px;
  border-bottom: 1px solid #5a5a5a;
}

.tb {
  width: 40px;
  height: 36px;
  flex: none;
  display: flex;
  align-items: center;
  justify-content: center;
  border-radius: 4px;
  position: relative;
}

.tb svg {
  width: 30px;
  height: 30px;
}

.tb-on {
  background: #5b8bc9;
  width: 38px;
  margin: 0 1px;
}

.fly::after {
  content: "";
  position: absolute;
  right: 1px;
  bottom: 1px;
  border-left: 5px solid transparent;
  border-bottom: 5px solid #d8d8d8;
}

.tb-sep {
  width: 8px;
  height: 26px;
  flex: none;
  background: linear-gradient(#1c1c1c, #1c1c1c) center / 2px 100% no-repeat;
}

.tb-sep-small {
  width: 6px;
}

.tb-glyph b {
  font-family: "Liberation Sans", sans-serif;
  line-height: 30px;
  color: #d8d8d8;
}

.g-three {
  font-size: 38px;
  padding-right: 10px;
}

.g-pct {
  font-size: 32px;
  padding-right: 2px;
}

.g-brace {
  font-size: 32px;
  font-weight: 400;
  white-space: nowrap;
}

.tb-glyph svg {
  position: absolute;
  left: 5px;
  top: 3px;
}

.combo {
  height: 22px;
  display: flex;
  align-items: center;
  justify-content: space-between;
  background: #5f5f5f;
  color: #cfcfcf;
  padding: 0 9px;
  font-size: 13px;
  flex: none;
}

.toolbar .combo {
  align-self: flex-start;
  margin-top: 4px;
}

.combo-all {
  width: 86px;
}

.combo-view {
  width: 81px;
  margin-left: 5px;
}

.combo-set {
  width: 147px;
  padding: 0 7px;
}

/* Ribbon */
.ribbon-tabs {
  height: 24px;
  flex: none;
  display: flex;
  align-items: flex-end;
  background: #505050;
  font-size: 15px;
  color: #8b8b8b;
  border-bottom: 1px solid #2e2e2e;
  position: relative;
}

.rtab {
  height: 21px;
  line-height: 23px;
  flex: none;
}

.rtab-on {
  margin-left: 15px;
  width: 101px;
  text-align: center;
  padding-left: 16px;
  background: linear-gradient(90deg, #686868, #585858);
  border: 1px solid #333;
  border-bottom: 0;
  border-radius: 3px 3px 0 0;
  color: #c8c8c8;
}

.rtab-free {
  margin-left: 30px;
  width: 116px;
}

.rtab-sel {
  width: 118px;
}

.rtab-paint {
  width: 136px;
}

.rtab-pop {
  width: 99px;
}

.rtab-menu {
  width: 14px;
  height: 9px;
  margin: 0 3px 6px 0;
  background: #d0d0d0;
  border-radius: 2px;
  display: flex;
  align-items: center;
  justify-content: center;
}

.rtab-menu i {
  border-left: 3px solid transparent;
  border-right: 3px solid transparent;
  border-top: 4px solid #333;
}

.ribbon-tabs .arrow-tiny {
  margin-bottom: 9px;
}

.ribbon-row {
  height: 23px;
  flex: none;
  display: flex;
  padding-left: 14px;
  font-size: 15px;
  color: #cfcfcf;
  border-bottom: 1px solid #2e2e2e;
}

.ribbon-row span {
  padding: 0 5.200px;
  height: 22px;
  line-height: 25px;
  border-right: 1px solid #2e2e2e;
  border-left: 1px solid #5a5a5a;
  white-space: nowrap;
}

/* Workspace */
.workspace {
  height: 746px;
  margin-top: 10px;
  flex: none;
  display: flex;
}

.left-dock {
  width: 358px;
  flex: none;
  display: flex;
  flex-direction: column;
}

.grip-row {
  display: flex;
  gap: 10px;
  padding-top: 3px;
}

.grip {
  height: 2px;
  background: repeating-linear-gradient(90deg, #8a8a8a 0 1px, #444 1px 2px);
}

.grip-a {
  width: 113px;
}

.grip-b {
  width: 227px;
}

.left-body {
  flex: 1;
  display: flex;
  margin-top: 6px;
  min-height: 0;
}

.strip {
  width: 50px;
  background: linear-gradient(90deg, #2c2c2c, #353535);
  border-right: 1px solid #000;
  display: flex;
  flex-direction: column;
  justify-content: flex-end;
  align-items: flex-start;
  padding-bottom: 3px;
}

.strip-play {
  width: 24px;
  height: 24px;
  margin: 0 0 14px 12px;
  background: #4c4c4c;
  border-radius: 3px;
  display: flex;
  align-items: center;
  justify-content: center;
}

.strip-play i {
  border-left: 8px solid #ccc;
  border-top: 6px solid transparent;
  border-bottom: 6px solid transparent;
}

.strip-thumb {
  width: 45px;
  height: 54px;
  margin-left: 4px;
  padding: 10px 2px 10px 4px;
  background: linear-gradient(#4b5a6b 70%, #3a7fd5);
  border-radius: 4px 0 0 4px;
}

.strip-thumb i {
  height: 100%;
  background: #69707c;
  border: 1px solid #2b3a4b;
}

/* Scene explorer */
.explorer {
  flex: 1;
  padding-top: 4px;
  display: flex;
  flex-direction: column;
  min-height: 0;
}

.explorer-menu {
  height: 24px;
  display: flex;
  align-items: center;
  font-size: 14.500px;
  padding-left: 87px;
  color: #d8d8d8;
}

.explorer-menu span:nth-child(1) {
  width: 61px;
}

.explorer-menu span:nth-child(2) {
  width: 70px;
}

.explorer-search {
  display: flex;
  align-items: center;
  margin-top: 4px;
  padding-left: 75px;
}

.search-box {
  width: 188px;
  height: 27px;
  border: 1px solid #666;
}

.more {
  color: #505078;
  font-size: 16px;
  line-height: 16px;
  font-weight: bold;
  margin-left: 27px;
}

.explorer-body {
  height: 638px;
  margin-top: 4px;
  padding-left: 71px;
  display: flex;
}

.filter-col {
  width: 26px;
  padding-top: 3px;
  border-right: 1px solid #2f2f2f;
  display: flex;
  flex-direction: column;
  align-items: flex-start;
}

.fbtn {
  width: 23px;
  height: 23px;
  margin-bottom: 4px;
  background: #5b8bc9;
  display: flex;
  align-items: center;
  justify-content: center;
}

.fbtn svg {
  width: 20px;
  height: 20px;
}

.filter-sep {
  width: 20px;
  height: 1px;
  margin: 1px 0 5px 2px;
  background: #222;
}

.filter-sep-b {
  margin: 1px 0 5px 2px;
}

.ftool {
  width: 23px;
  height: 23px;
  margin-bottom: 4px;
}

.ftool svg {
  width: 23px;
  height: 23px;
  display: block;
}

.tree {
  width: 205px;
  display: flex;
  flex-direction: column;
}

.tree-head {
  height: 22px;
  padding: 0 0 2px 3px;
  border-top: 1px solid #5c5c5c;
  border-bottom: 1px solid #5c5c5c;
  display: flex;
  align-items: center;
  justify-content: space-between;
  font-size: 13px;
  color: #e0e0e0;
}

.corner {
  border-top: 5px solid #eee;
  border-left: 5px solid transparent;
}

.tree-row {
  height: 22px;
  display: flex;
  color: #858585;
}

.gutter {
  width: 58px;
  background: #3f3f3f;
  display: flex;
  align-items: center;
  border-right: 1px solid #373737;
}

.branch {
  width: 11px;
  height: 1px;
  margin-left: 8px;
  background: #303030;
}

.eye {
  width: 18px;
  height: 11px;
}

.eye-off path {
  fill: #2a2a2a;
}

.dot {
  width: 14px;
  height: 14px;
  margin-left: 3px;
  border-radius: 50%;
  background: #dcdcdc;
}

.tree-name {
  flex: 1;
  background: #515151;
  padding-left: 4px;
  line-height: 24px;
  font-size: 13px;
}

.tree-row-on .tree-name {
  background: #7a7a7a;
  color: #fff;
}

.tree-fill {
  flex: 1;
}

.hscroll {
  height: 21px;
  display: flex;
  background: #f0f0f0;
}

.hscroll-btn {
  width: 21px;
  height: 21px;
}

.hscroll-thumb {
  width: 121px;
  background: #c8c8c8;
}

.hscroll-end {
  margin-left: auto;
}

.layer-row {
  margin-top: 4px;
  display: flex;
  align-items: center;
  padding-left: 75px;
}

.layer-field {
  width: 182px;
  height: 26px;
  padding-left: 1px;
  border: 1px solid #666;
  color: #e6e600;
  font-size: 15.500px;
  line-height: 22px;
}

.layer-row .arrow {
  margin-left: 5px;
}

.layer-sep {
  width: 1px;
  height: 28px;
  margin-left: 5px;
  background: #222;
}

.layer-row .more {
  margin-left: 15px;
  align-self: flex-start;
  margin-top: 2px;
}

/* Viewport */
.viewport {
  width: 1060px;
  flex: none;
  position: relative;
  background: #373737;
  outline: 2px solid #6e5f30;
  outline-offset: -2px;
}

.vp-label {
  position: absolute;
  left: 5px;
  top: 9px;
  font-size: 14px;
  color: #c9c9c9;
  z-index: 1;
}

.vp-canvas {
  position: absolute;
  inset: 0;
  width: 1060px;
  height: 746px;
}

.vp-axis {
  font-size: 14px;
  fill: #e8e040;
  font-family: "Liberation Sans", sans-serif;
}

.vp-axis-y {
  fill: #c8a838;
  font-size: 17px;
}

.vp-mini {
  font-size: 12px;
  fill: #2020c0;
  font-family: "Liberation Sans", sans-serif;
}

.vp-mini-y {
  fill: #117711;
}

.vp-cube {
  font-size: 7px;
  fill: #bbb;
  text-anchor: middle;
}

/* Command panel */
.command {
  margin-left: 2px;
  width: 500px;
  flex: none;
  display: flex;
  flex-direction: column;
  min-height: 0;
}

.grip-cmd {
  margin-top: 3px;
  width: 500px;
}

.cmd-tabs {
  display: flex;
  gap: 2px;
  margin-top: 7px;
  height: 34px;
  padding-left: 4px;
  border-bottom: 1px solid #363636;
}

.ctab {
  width: 38px;
  height: 34px;
  background: #3f3f3f;
  border-radius: 4px 4px 0 0;
  display: flex;
  align-items: center;
  justify-content: center;
}

.ctab svg {
  width: 24px;
  height: 24px;
}

.ctab-on {
  background: #4c4c4c;
}

.cmd-body {
  height: 696px;
  display: flex;
  overflow: hidden;
}

.col-stack {
  width: 253px;
  flex: none;
  padding: 10px 0 0 9px;
  display: flex;
  flex-direction: column;
  border-right: 1px solid #3a3a3a;
}

.name-row {
  display: flex;
}

.name-field {
  width: 212px;
  height: 22px;
  background: #646464;
  padding-left: 3px;
  line-height: 22px;
  font-size: 13px;
  color: #d0d0d0;
}

.name-swatch {
  width: 20px;
  height: 23px;
  margin-left: 8px;
  background: #dcc95a;
  border: 1px solid #333;
}

.mod-list {
  width: 242px;
  height: 22px;
  margin-top: 12px;
  background: #646464;
  display: flex;
  align-items: center;
  justify-content: space-between;
  padding: 0 8px 0 3px;
  color: #d0d0d0;
}

.stack-box {
  width: 242px;
  height: 127px;
  margin-top: 5px;
  border: 2px solid #f4f4f4;
}

.stack-row {
  height: 21px;
  display: flex;
  align-items: center;
  padding-left: 5px;
  border-bottom: 1px solid #6a6a6a;
  color: #e4e4e4;
  font-size: 13px;
}

.stack-row-base {
  padding-left: 8px;
}

.stack-eye {
  width: 17px;
  height: 11px;
}

.tri-right {
  border-left: 6px solid #ddd;
  border-top: 4px solid transparent;
  border-bottom: 4px solid transparent;
  margin-left: 10px;
}

.stack-row-base .tri-right {
  margin-left: 0;
}

.tri-space {
  width: 16px;
}

.stack-name {
  flex: 1;
  height: 19px;
  margin-left: 8px;
  padding: 0 2px;
  display: flex;
  align-items: center;
  justify-content: space-between;
  border: 1px solid transparent;
}

.stack-name-on {
  border-color: #6f8cb0;
  background: #3b3f46;
}

.stack-sub {
  width: 14px;
  height: 15px;
  margin-right: 4px;
}

.stack-tools {
  height: 28px;
  margin-top: 7px;
  display: flex;
  align-items: center;
  padding-left: 3px;
}

.st {
  width: 24px;
  height: 24px;
  flex: none;
}

.st svg {
  width: 24px;
  height: 24px;
  display: block;
}

.st-on {
  width: 28px;
  height: 28px;
  background: #5b8bc9;
  border-radius: 4px;
  padding: 2px;
}

.st-sep {
  width: 1px;
  height: 16px;
  margin: 0 7px 0 8px;
  background: #111;
}

.stack-tools .st:nth-child(5) {
  margin-right: 6px;
}

.stack-tools .st:last-child {
  margin-left: 1px;
}

.divider {
  margin: 19px 11px 0 5px;
  height: 1px;
  background: #666;
  position: relative;
}

.divider i {
  position: absolute;
  left: 108px;
  top: -1px;
  width: 14px;
  height: 3px;
  background: repeating-linear-gradient(90deg, #bbb 0 1px, #444 1px 2px);
}

.scroll-wrap {
  display: flex;
  flex: 1;
  margin: 9px 0 0 -1px;
  min-height: 0;
}

.vscroll {
  width: 7px;
  margin-left: 5px;
  background: #3e3e3e;
  border-radius: 3px;
  flex: none;
}

.rollout {
  background: #4e4e4e;
  border-radius: 4px;
  width: 232px;
  flex: none;
}

.rollout-mode {
  height: 160px;
}

.roll-head {
  height: 22px;
  display: flex;
  align-items: center;
  padding-left: 7px;
  font-size: 13.800px;
  font-weight: 700;
  color: #eee;
}

.rollout-mode .roll-head, .rollout-borders .roll-head {
  height: 20px;
}

.tri-down {
  margin-right: 8px;
  border-left: 4px solid transparent;
  border-right: 4px solid transparent;
  border-top: 6px solid #bbb;
}

.roll-grip {
  width: 8px;
  height: 8px;
  margin-left: auto;
  margin-right: 9px;
  background: repeating-linear-gradient(90deg, #777 0 1px, transparent 1px 2px), repeating-linear-gradient(#777 0 1px, transparent 1px 2px);
  background-blend-mode: multiply;
}

.radio-item {
  display: flex;
  align-items: center;
  gap: 9px;
  font-size: 13px;
  flex: none;
}

.radio {
  width: 12px;
  height: 12px;
  border-radius: 50%;
  background: #5f5f5f;
}

.radio-on {
  background: #d8d8d8;
  box-shadow: 0 0 0 2px #5f5f5f;
  width: 9px;
  height: 9px;
  margin: 1px 1px 1px 2px;
}

.mode-radios {
  display: flex;
  margin-top: 8px;
  height: 20px;
  padding-left: 26px;
}

.mode-model {
  width: 98px;
}

.mode-op {
  text-align: center;
  margin-top: 3px;
  line-height: 20px;
  font-size: 13px;
  padding-left: 2px;
}

.btn-row {
  display: flex;
  gap: 8px;
  padding-left: 16px;
  margin-top: 3px;
}

.btn-row-first {
  margin-top: 4px;
}

.btn-row-ring {
  margin-top: 7px;
}

.btn-row-center {
  justify-content: center;
  padding-left: 0;
  margin-top: 5px;
  padding-right: 4px;
}

.btn-row-settings {
  padding-left: 25px;
  gap: 14px;
  margin-top: 10px;
}

.btn {
  height: 20px;
  background: #606060;
  border-radius: 3px;
  text-align: center;
  line-height: 20px;
  font-size: 13px;
  color: #dcdcdc;
  flex: none;
}

.btn-off {
  background: #565656;
  color: #7e7e7e;
}

.btn-commit, .btn-settings {
  width: 84px;
}

.cage-row {
  display: flex;
  align-items: center;
  margin-top: 4px;
  padding-left: 23px;
  height: 20px;
  font-size: 13px;
}

.cage-row span {
  margin-left: 4px;
  flex: 1;
}

.check {
  width: 12px;
  height: 12px;
  background: #656565;
  border-radius: 1px;
  flex: none;
}

.check-on::after {
  content: "";
  display: block;
  width: 4px;
  height: 8px;
  margin: 0 0 0 4px;
  border-right: 2px solid #888;
  border-bottom: 2px solid #888;
  transform: rotate(40deg);
}

.swatch {
  width: 20px;
  height: 18px;
  border: 1px solid #222;
}

.swatch-a {
  background: #ffc800;
}

.swatch-b {
  background: #e6e69a;
  margin: 0 25px 0 8px;
}

/* Right rollouts */
.col-rollouts {
  flex: none;
  width: 246px;
  display: flex;
  padding-top: 4px;
  min-height: 0;
}

.roll-list {
  width: 231px;
  flex: none;
  display: flex;
  flex-direction: column;
}

.vscroll-right {
  width: 8px;
  margin-left: 4px;
  height: 330px;
  background: #555;
}

.rollout-sel {
  height: 340px;
  width: 231px;
}

.sub-row {
  display: flex;
  margin-top: 5px;
  padding-left: 31px;
}

.sub {
  width: 30px;
  height: 28px;
  display: flex;
  align-items: center;
  justify-content: center;
  border-radius: 4px;
}

.sub svg {
  width: 22px;
  height: 22px;
}

.sub-on {
  background: #5b8bc9;
  width: 28px;
  margin: 0 1px;
}

.chk {
  height: 24px;
  display: flex;
  align-items: center;
  gap: 4px;
  padding-left: 20px;
  font-size: 13px;
  color: #dcdcdc;
}

.sub-row + .chk {
  margin-top: 4px;
}

.chk-off {
  color: #7e7e7e;
}

.chk-off .check {
  background: #565656;
}

.angle-label {
  width: 68px;
}

.spinner {
  display: flex;
  align-items: center;
  justify-content: space-between;
  background: #565656;
  color: #7e7e7e;
  height: 18px;
  padding: 0 4px;
  font-size: 13px;
  flex: none;
}

.spinner-angle {
  width: 105px;
}

.spin-arrows {
  width: 7px;
  height: 12px;
  background:
    linear-gradient(to top left, #aaa 50%, transparent 50%) 0 0 / 50% 5px no-repeat,
    linear-gradient(to top right, #aaa 50%, transparent 50%) 100% 0 / 50% 5px no-repeat,
    linear-gradient(to bottom left, #aaa 50%, transparent 50%) 0 100% / 50% 5px no-repeat,
    linear-gradient(to bottom right, #aaa 50%, transparent 50%) 100% 100% / 50% 5px no-repeat;
}

.btn-half {
  width: 94px;
}

.btn-row-gap {
  margin-top: 8px;
  gap: 4px;
}

.btn-ring {
  width: 78px;
}

.btn-loop {
  width: 74px;
  margin-left: 3px;
}

.btn-spin {
  width: 13px;
  height: 20px;
  background: #606060;
  border-radius: 2px;
  display: flex;
  align-items: center;
  justify-content: center;
}

.btn-full {
  width: 196px;
}

.preview {
  position: relative;
  width: 211px;
  height: 40px;
  margin: 12px 0 0 7px;
  padding: 11px 0 0 4px;
  border: 1px solid #353535;
  border-radius: 3px;
  display: flex;
  align-items: center;
}

.preview-title {
  position: absolute;
  left: 6px;
  top: -9px;
  padding: 0 1px;
  background: #4e4e4e;
  font-size: 13px;
  line-height: 17px;
}

.preview .radio-item {
  gap: 8px;
}

.preview-off {
  width: 66px;
}

.preview-sub {
  width: 82px;
}

.sel-count {
  margin-top: 6px;
  line-height: 20px;
  text-align: right;
  padding-right: 20px;
  font-size: 13px;
}

.rollout-borders {
  width: 231px;
  height: 175px;
  margin-top: 6px;
}

.border-first {
  margin-top: 16px;
  gap: 3px;
}

.border-row {
  margin-top: 6px;
  gap: 3px;
}

.border-wide {
  margin-top: 8px;
  gap: 2px;
}

.border-wide:last-child {
  gap: 8px;
}

.btn-opt {
  width: 73px;
}

.btn-box {
  width: 18px;
  height: 20px;
  background: #606060;
  border-radius: 3px;
  display: flex;
  align-items: center;
  justify-content: center;
  flex: none;
}

.btn-box i {
  width: 10px;
  height: 9px;
  border: 1px solid #111;
  border-top-width: 3px;
}

.btn-right {
  margin-left: 5px;
}

.btn-connect {
  width: 74px;
  margin-left: 5px;
}

.btn-shape {
  width: 176px;
}

.rollout-soft {
  width: 231px;
  height: 190px;
  margin-top: 5px;
}

.chk-soft {
  margin-top: 7px;
}

.chk-in {
  padding-left: 26px;
}

.edge-label {
  width: 107px;
}

.spinner-edge {
  width: 54px;
}

.soft-row {
  display: flex;
  align-items: center;
  justify-content: flex-end;
  gap: 6px;
  height: 18px;
  margin-top: 8px;
  padding-right: 42px;
  color: #7e7e7e;
}

.chk-in + .soft-row {
  margin-top: 5px;
}

.spinner-soft {
  width: 89px;
}

/* Bottom area */
.bottom {
  flex: 1;
  display: flex;
  flex-direction: column;
  min-height: 0;
}

.slider-row {
  display: flex;
  gap: 2px;
  padding: 5px 0 0 12px;
}

.slider-btn {
  width: 18px;
  height: 21px;
  background: #5e5e5e;
  border-radius: 3px;
  text-align: center;
  line-height: 20px;
  color: #bbb;
  font-size: 14px;
}

.slider-main {
  width: 154px;
  height: 21px;
  background: #5e5e5e;
  border-radius: 3px;
  text-align: center;
  line-height: 21px;
  color: #bfbfbf;
}

.status {
  display: flex;
  margin-top: 42px;
  height: 62px;
}

.listener {
  width: 121px;
  margin-left: 5px;
  padding-top: 1px;
  flex: none;
}

.listener-pink {
  height: 27px;
  background: #dcc0c0;
  border: 1px solid #a8a8a8;
  border-bottom-color: #fff;
}

.listener-white {
  height: 27px;
  margin-top: 2px;
  padding-left: 4px;
  background: #fff;
  border: 1px solid #a8a8a8;
  color: #1515b0;
  font-family: "Liberation Mono", monospace;
  font-size: 16px;
  line-height: 21px;
  overflow: hidden;
  white-space: nowrap;
}

.status-sep {
  width: 1px;
  height: 62px;
  margin-left: 6px;
  background: #1a1a1a;
}

.prompts {
  width: 676px;
  margin-left: 4px;
  padding-top: 7px;
  display: flex;
  flex-direction: column;
  gap: 14px;
  font-size: 13px;
  line-height: 17px;
  color: #e8e8e8;
  flex: none;
}

.prompt-dist {
  letter-spacing: .18px;
}

.coords {
  width: 547px;
  flex: none;
  padding-top: 3px;
}

.coord-row {
  height: 25px;
  display: flex;
  align-items: center;
}

.co-ico {
  width: 24px;
  height: 24px;
  flex: none;
}

.co-ico svg, .co-abs svg, .tag-btn svg {
  width: 100%;
  height: 100%;
  display: block;
}

.co-lock {
  margin-left: 8px;
}

.co-abs {
  width: 26px;
  height: 25px;
  margin-left: 9px;
  padding: 2px;
  background: #5b8bc9;
  border-radius: 3px;
  flex: none;
}

.axis {
  width: 17px;
  flex: none;
  font-size: 13px;
  margin-left: 6px;
}

.axis-y {
  margin-left: 3px;
  width: 16px;
}

.axis-z {
  margin-left: 15px;
  width: 16px;
}

.coord-row .spinner {
  height: 21px;
}

.coord-x {
  width: 84px;
  background: #606060;
  color: #e8e8e8;
}

.coord-y {
  width: 72px;
}

.coord-z {
  width: 71px;
}

.grid-label {
  margin-left: 18px;
  color: #e8e8e8;
}

.tag-row {
  display: flex;
  align-items: center;
  height: 25px;
  margin: 6px 0 0 380px;
  gap: 6px;
  font-size: 13px;
}

.tag-btn {
  width: 26px;
  height: 25px;
  padding: 2px;
  background: #5b8bc9;
  border-radius: 4px;
  flex: none;
}

.transport {
  width: 145px;
  flex: none;
  padding-top: 2px;
}

.transport-top {
  width: 145px;
  height: 24px;
  display: block;
}

.transport-low {
  display: flex;
  align-items: center;
  height: 24px;
  margin-top: 3px;
}

.key-arrows {
  width: 16px;
  height: 12px;
  margin: 0 5px 0 2px;
  flex: none;
}

.time-field {
  width: 85px;
  height: 20px;
  background: #606060;
  color: #bbb;
  border-left: 1px solid #1a1a1a;
}

.time-cfg {
  width: 21px;
  height: 21px;
  margin-left: 6px;
  flex: none;
}

.setkey-big {
  width: 53px;
  height: 54px;
  margin: 2px 0 0 14px;
  padding: 2px;
  background: #5e5e5e;
  border-radius: 4px;
  flex: none;
}

.setkey-big svg {
  width: 100%;
  height: 100%;
  display: block;
}

.key-col {
  width: 58px;
  margin: 2px 0 0 5px;
  display: flex;
  flex-direction: column;
  gap: 2px;
  flex: none;
}

.keybtn {
  height: 25px;
  background: #5e5e5e;
  border-radius: 4px;
  text-align: center;
  line-height: 25px;
  font-size: 13px;
  color: #dcdcdc;
  display: block;
}

.filter-block {
  width: 143px;
  margin: 2px 0 0 5px;
  flex: none;
}

.combo-selected {
  height: 22px;
  padding: 0 8px;
}

.filter-row {
  display: flex;
  margin-top: 6px;
}

.fly-key {
  position: relative;
  width: 31px;
  height: 25px;
  flex: none;
}

.fly-key svg {
  width: 24px;
  height: 25px;
  display: block;
}

.filters-btn {
  width: 110px;
}

.nav-grid {
  margin: 1px 0 0 10px;
  display: grid;
  grid-template-columns: repeat(4, 28.500px);
  grid-auto-rows: 27px;
}

.nav {
  position: relative;
  display: flex;
  align-items: center;
  justify-content: center;
}

.nav svg {
  width: 22px;
  height: 22px;
}
```
